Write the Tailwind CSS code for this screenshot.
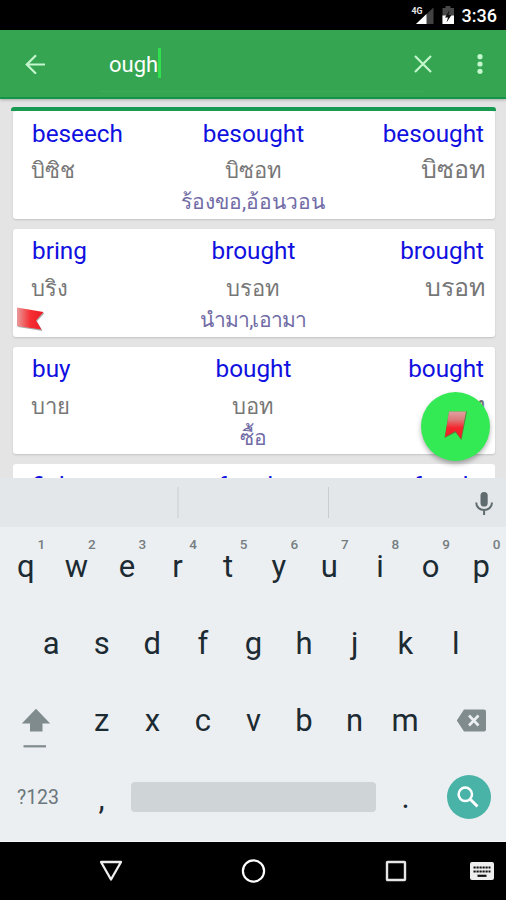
<!DOCTYPE html>
<html lang="th">
<head>
<meta charset="utf-8">
<title>Irregular verbs</title>
<script src="https://cdn.jsdelivr.net/npm/@tailwindcss/browser@4"></script>
</head>
<body class="w-[506px] h-[900px] overflow-hidden bg-[#e4e4e4] font-['Roboto','Noto_Sans',sans-serif]">
<div class="relative flex h-[900px] w-[506px] flex-col overflow-hidden">

  <!-- status bar -->
  <div class="flex h-[30px] shrink-0 items-center justify-end bg-black pr-[9px] text-white">
    <svg class="h-[30px] w-[50px]" viewBox="0 0 50 30">
      <path d="M28.500 7.500v16.500H11z" fill="#424242"/>
      <path d="M21.500 14V24H11z" fill="#fff"/>
      <text x="6.500" y="14" font-size="9.500" font-weight="700" fill="#e8e8e8" textLength="11" lengthAdjust="spacingAndGlyphs">4G</text>
      <path d="M37.500 8h3V6h5v2h3.500v16H37.500z" fill="#484848"/>
      <path d="M37.500 15.500h11.500V24H37.500z" fill="#fff"/>
      <path d="M44.500 10l-4.500 7.500h3L41.500 22.500l5-7.500h-3z" fill="#111"/>
    </svg>
    <div class="w-[42px] pt-[2px] text-right text-[18px] font-medium leading-[30px]">3:36</div>
  </div>

  <!-- search toolbar -->
  <div class="relative z-10 flex h-[69px] shrink-0 items-center border-b-2 border-[#159447] bg-[#35a552] shadow-[0_1px_3px_rgba(0,0,0,.25)]">
    <svg class="ml-[25px] h-5 w-5" viewBox="0 0 20 20" fill="none" stroke="#c4f7cd" stroke-width="2.200"><path d="M20 10.500H2M11 1.300L1.800 10.500 11 19.700"/></svg>
    <div class="-mt-[4px] ml-[55px] flex h-[60px] w-[323px] items-center border-b border-[#3fab59] pl-[9px] pt-[4px] text-[22px] text-white">
      <span class="pt-[3px]">ough</span><span class="h-[30px] w-[3px] bg-[#31e04f]"></span>
    </div>
    <svg class="-ml-[9px] h-[18px] w-[18px]" viewBox="0 0 18 18" fill="none" stroke="#c4f7cd" stroke-width="2.200"><path d="M1 1l16 16M17 1L1 17"/></svg>
    <svg class="ml-[45px] h-[20px] w-[6px]" viewBox="0 0 6 20" fill="#c4f7cd"><circle cx="3" cy="2.700" r="2.600"/><circle cx="3" cy="10" r="2.600"/><circle cx="3" cy="17.300" r="2.600"/></svg>
  </div>

  <!-- verb list -->
  <div class="relative flex h-[379px] shrink-0 flex-col gap-[10px] overflow-hidden pl-[13px] pr-[11px] pt-[12px]">
    <div class="absolute left-[11px] right-[10px] top-[8px] h-[4px] rounded-t-[3px] bg-[#189a52]"></div>

    <div class="grid h-[108px] shrink-0 grid-cols-3 grid-rows-[44px_31px_33px] rounded-[3px] bg-white pl-[18px] pr-[11px] shadow-[0_1px_2px_rgba(0,0,0,.15)]">
      <div class="pl-px text-[24.300px] leading-[45px] text-[#1010e0]">beseech</div>
      <div class="-ml-[8px] text-center text-[24.300px] leading-[45px] text-[#1010e0]">besought</div>
      <div class="text-right text-[24.300px] leading-[45px] text-[#1010e0]">besought</div>
      <div class="text-[22px] leading-[31px] text-[#777]">บิซิช</div>
      <div class="-ml-[9px] text-center text-[22px] leading-[31px] text-[#777]">บิซอท</div>
      <div class="-mr-px text-right text-[25px] leading-[30px] text-[#777]">บิซอท</div>
      <div class="col-span-3 -ml-[9px] pt-px text-center text-[21px] leading-[31px] text-[#716ba6]">ร้องขอ,อ้อนวอน</div>
    </div>

    <div class="relative grid h-[107.500px] shrink-0 grid-cols-3 grid-rows-[44px_31px_32px] rounded-[3px] bg-white pl-[18px] pr-[11px] shadow-[0_1px_2px_rgba(0,0,0,.15)]">
      <div class="pl-px text-[24.300px] leading-[44px] text-[#1010e0]">bring</div>
      <div class="-ml-[8px] text-center text-[24.300px] leading-[44px] text-[#1010e0]">brought</div>
      <div class="text-right text-[24.300px] leading-[44px] text-[#1010e0]">brought</div>
      <div class="text-[22px] leading-[31px] text-[#777]">บริง</div>
      <div class="-ml-[9px] text-center text-[22px] leading-[31px] text-[#777]">บรอท</div>
      <div class="-mr-px text-right text-[25px] leading-[30px] text-[#777]">บรอท</div>
      <div class="col-span-3 -ml-[9px] pt-px text-center text-[21px] leading-[31px] tracking-[-0.800px] text-[#716ba6]">นำมา,เอามา</div>
      <svg class="absolute left-[3px] top-[77px] h-[27px] w-[30px]" viewBox="0 0 30 27">
        <defs><linearGradient id="flag" x1="0" x2="1"><stop offset="0" stop-color="#e99a9a"/><stop offset=".5" stop-color="#f52f33"/><stop offset="1" stop-color="#ec1c24"/></linearGradient></defs>
        <path d="M1.500 2l26.500 4.300-7.500 8L26 24 1.500 20z" transform="translate(.5 1)" fill="#777" opacity=".6"/>
        <path d="M1 1.500l26.500 4.500-7.500 8.500L25.500 23.500 1 20z" fill="url(#flag)"/>
      </svg>
    </div>

    <div class="grid h-[107.500px] shrink-0 grid-cols-3 grid-rows-[44px_31px_32px] rounded-[3px] bg-white pl-[18px] pr-[11px] shadow-[0_1px_2px_rgba(0,0,0,.15)]">
      <div class="pl-px text-[24.300px] leading-[44px] text-[#1010e0]">buy</div>
      <div class="-ml-[8px] text-center text-[24.300px] leading-[44px] text-[#1010e0]">bought</div>
      <div class="text-right text-[24.300px] leading-[44px] text-[#1010e0]">bought</div>
      <div class="text-[22px] leading-[31px] text-[#777]">บาย</div>
      <div class="-ml-[9px] text-center text-[22px] leading-[31px] text-[#777]">บอท</div>
      <div class="-mr-px text-right text-[25px] leading-[30px] text-[#777]">บอท</div>
      <div class="col-span-3 -ml-[9px] pt-px text-center text-[21px] leading-[31px] text-[#716ba6]">ซื้อ</div>
    </div>

    <div class="grid h-[107.500px] shrink-0 grid-cols-3 grid-rows-[44px_31px_32px] rounded-[3px] bg-white pl-[18px] pr-[11px]">
      <div class="pl-px text-[24.300px] leading-[44px] text-[#1010e0]">fight</div>
      <div class="-ml-[8px] text-center text-[24.300px] leading-[44px] text-[#1010e0]">fought</div>
      <div class="text-right text-[24.300px] leading-[44px] text-[#1010e0]">fought</div>
    </div>

    <!-- bookmark button -->
    <div class="absolute left-[421px] top-[293px] h-[69px] w-[69px] rounded-full bg-[#33ea55] shadow-[0_3px_5px_rgba(0,0,0,.3)]">
      <svg class="absolute left-[22px] top-[18px] h-[32px] w-[26px]" viewBox="0 0 26 32">
        <defs><linearGradient id="mark" x1="0" y1="0" x2="0" y2="1"><stop offset="0" stop-color="#e0a0a0"/><stop offset=".3" stop-color="#dc7a7a"/><stop offset=".6" stop-color="#f5242c"/><stop offset="1" stop-color="#e5222a"/></linearGradient></defs>
        <path d="M6 1.500h18L18.500 30l-6-7.500L1.500 28z" fill="#5d6a33" opacity=".8"/>
        <path d="M6 1.500h17L18 29l-5.500-8L2 27z" fill="url(#mark)"/>
      </svg>
    </div>
  </div>

  <!-- suggestion strip -->
  <div class="flex h-[49px] shrink-0 items-center bg-[#e4e7e9]">
    <div class="ml-[177px] h-[31px] w-[2px] bg-[#d6dadc]"></div>
    <div class="ml-[149px] h-[31px] w-px bg-[#c9cdcf]"></div>
    <svg class="ml-[146px] mt-[2px] h-[25px] w-[18px]" viewBox="0 0 18 25"><rect x="5.500" y="1" width="7.200" height="14.500" rx="3.600" fill="#5f6b6f"/><path d="M1.200 11.500c0 10 15.800 10 15.800 0M9.100 19v5" fill="none" stroke="#5f6b6f" stroke-width="2"/></svg>
  </div>

  <!-- keyboard -->
  <div class="flex h-[315px] shrink-0 flex-col border-b border-[#f8f8f8] bg-[#eceff1] text-[31px] leading-[78px] text-[#1c2b33]">
    <div class="grid h-[77px] translate-x-[0.500px] grid-cols-10 text-center leading-[79px]">
      <div class="relative">q<span class="absolute right-[6px] top-[9px] text-[13.500px] font-medium leading-4 text-[#757d81]">1</span></div>
      <div class="relative">w<span class="absolute right-[6px] top-[9px] text-[13.500px] font-medium leading-4 text-[#757d81]">2</span></div>
      <div class="relative">e<span class="absolute right-[6px] top-[9px] text-[13.500px] font-medium leading-4 text-[#757d81]">3</span></div>
      <div class="relative">r<span class="absolute right-[6px] top-[9px] text-[13.500px] font-medium leading-4 text-[#757d81]">4</span></div>
      <div class="relative">t<span class="absolute right-[6px] top-[9px] text-[13.500px] font-medium leading-4 text-[#757d81]">5</span></div>
      <div class="relative">y<span class="absolute right-[6px] top-[9px] text-[13.500px] font-medium leading-4 text-[#757d81]">6</span></div>
      <div class="relative">u<span class="absolute right-[6px] top-[9px] text-[13.500px] font-medium leading-4 text-[#757d81]">7</span></div>
      <div class="relative">i<span class="absolute right-[6px] top-[9px] text-[13.500px] font-medium leading-4 text-[#757d81]">8</span></div>
      <div class="relative">o<span class="absolute right-[6px] top-[9px] text-[13.500px] font-medium leading-4 text-[#757d81]">9</span></div>
      <div class="relative">p<span class="absolute right-[6px] top-[9px] text-[13.500px] font-medium leading-4 text-[#757d81]">0</span></div>
    </div>
    <div class="grid h-[78px] translate-x-[0.500px] grid-cols-9 px-[25.300px] text-center leading-[79px]">
      <div>a</div><div>s</div><div>d</div><div>f</div><div>g</div><div>h</div><div>j</div><div>k</div><div>l</div>
    </div>
    <div class="flex h-[77px] text-center">
      <div class="w-[76px]">
        <svg class="ml-[21px] mt-[26px] h-[42px] w-[30px]" viewBox="0 0 30 42" fill="#7f8b8c"><path d="M15 .7L29.200 15.500H21.500v8H9v-8H.8z"/><rect x="2.500" y="37.200" width="22.500" height="2.200"/></svg>
      </div>
      <div class="grid w-[354px] translate-x-[0.500px] grid-cols-7"><div>z</div><div>x</div><div>c</div><div>v</div><div>b</div><div>n</div><div>m</div></div>
      <div class="w-[76px]">
        <svg class="ml-[26px] mt-[27px] h-[23px] w-[31px]" viewBox="0 0 31 23"><path d="M8 .5h20q2 0 2 2v18q0 2-2 2H8L.8 11.500z" fill="#7f8b8c"/><path d="M13 6.500l9.500 10M22.500 6.500l-9.500 10" stroke="#eceff1" stroke-width="2.600"/></svg>
      </div>
    </div>
    <div class="flex h-[76px] items-center">
      <div class="w-[76px] pt-px text-center text-[19.500px] text-[#6b777c]">?123</div>
      <div class="w-[51px] pt-[4px] text-center">,</div>
      <div class="ml-[4px] h-[30px] w-[245px] rounded-[4px] bg-[#cfd4d7]"></div>
      <div class="ml-[4px] w-[51px] pt-[2px] text-center">.</div>
      <div class="ml-[16px] flex h-[44px] w-[44px] items-center justify-center rounded-full bg-[#49b3a8]">
        <svg class="-ml-[2px] h-[22px] w-[22px]" viewBox="0 0 22 22" fill="none" stroke="#fff"><circle cx="8.300" cy="8.300" r="6.700" stroke-width="2.500"/><path d="M13 13l7.500 7.500" stroke-width="3"/></svg>
      </div>
    </div>
  </div>

  <!-- navigation bar -->
  <div class="flex h-[58px] shrink-0 items-center bg-black">
    <svg class="ml-[98px] h-[24px] w-[26px]" viewBox="0 0 26 24" fill="none" stroke="#eee" stroke-width="2.300" stroke-linejoin="round"><path d="M3 3h20L13 20.500z"/></svg>
    <svg class="ml-[117px] h-[26px] w-[26px]" viewBox="0 0 26 26" fill="none" stroke="#fff" stroke-width="2.200"><circle cx="12.500" cy="13" r="10.600"/></svg>
    <svg class="ml-[118px] h-[22px] w-[22px]" viewBox="0 0 22 22" fill="none" stroke="#e6e6e6" stroke-width="2.400"><rect x="2" y="2" width="18" height="18" rx=".5"/></svg>
    <svg class="ml-[62px] h-[20px] w-[26px]" viewBox="0 0 26 20"><rect x="1" y="1" width="24" height="18" rx="2" fill="#eee"/><path d="M4.500 6.500h17M4.500 10.500h17" stroke="#111" stroke-width="2.200" stroke-dasharray="2.200 .8"/><path d="M8.500 14.800h9" stroke="#111" stroke-width="2.200"/></svg>
  </div>
</div>
</body>
</html>
